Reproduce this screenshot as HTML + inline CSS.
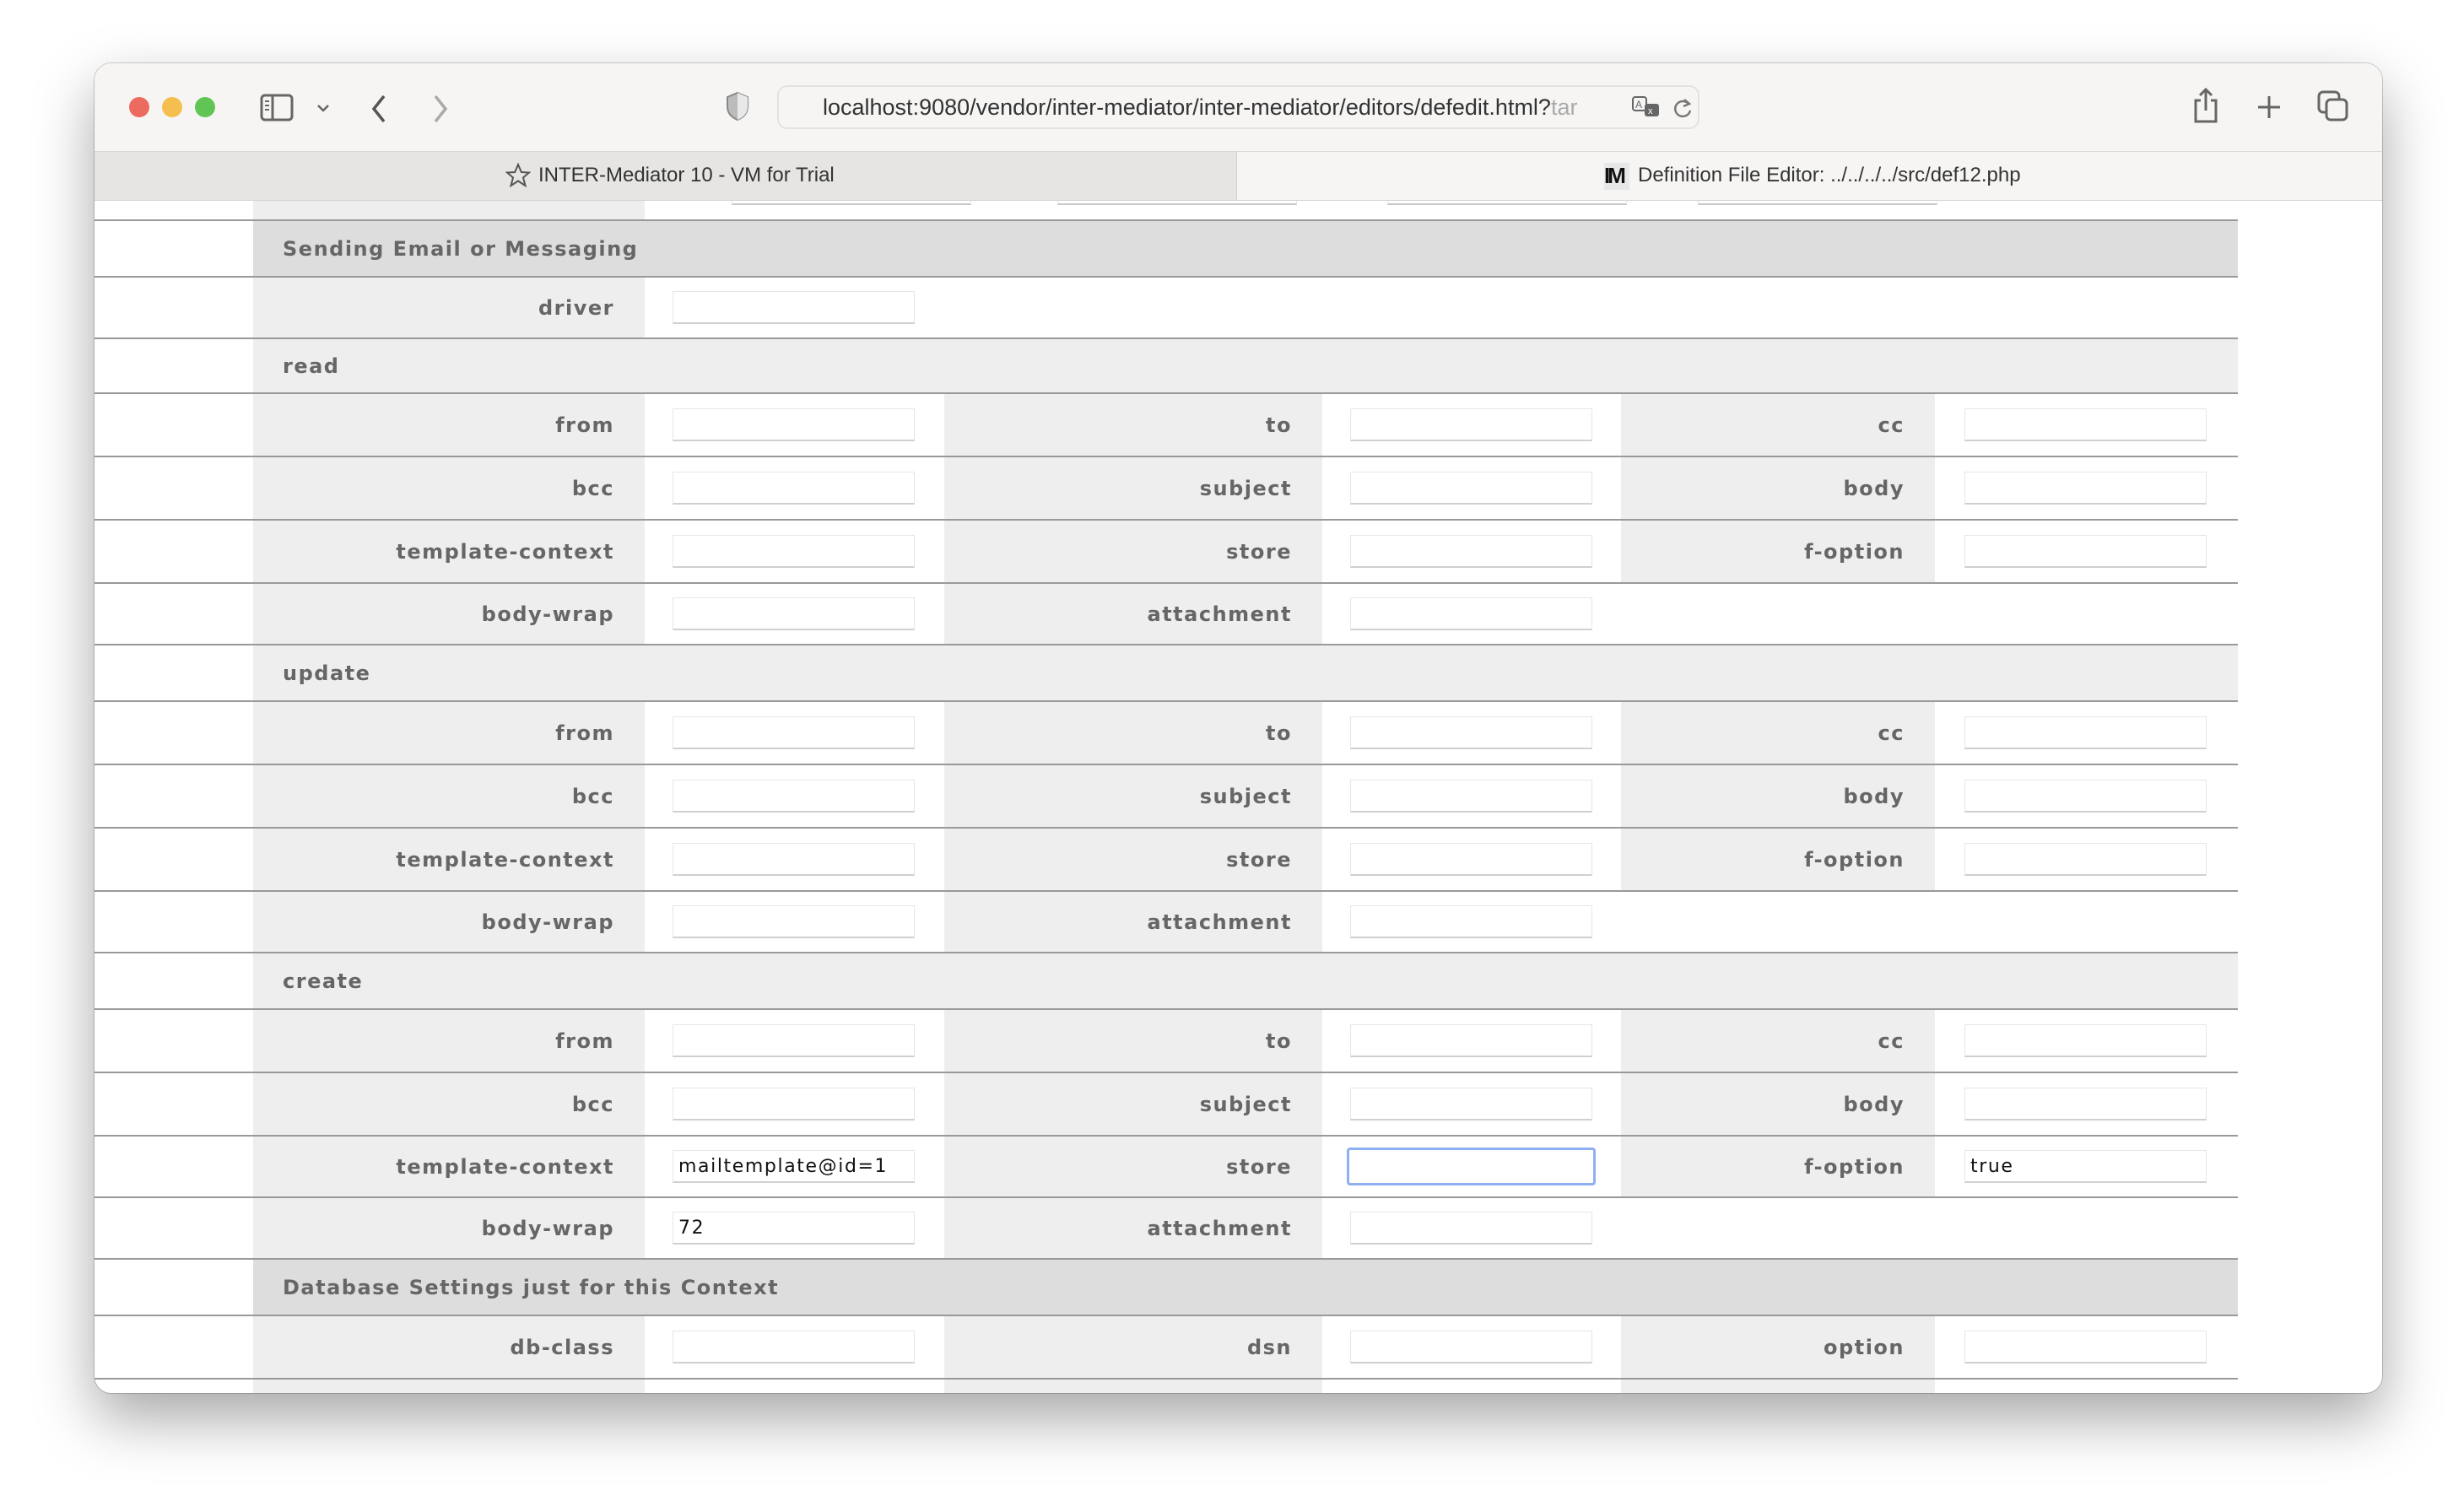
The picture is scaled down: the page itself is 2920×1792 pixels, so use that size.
<!DOCTYPE html>
<html><head><meta charset="utf-8"><style>
*{box-sizing:border-box;margin:0;padding:0}
body{width:2920px;height:1792px;background:#fff;position:relative;overflow:hidden;font-family:"DejaVu Sans","Liberation Sans",sans-serif}
.win{position:absolute;left:112px;top:75px;width:2711px;height:1576px;border-radius:20px;background:#fff;overflow:hidden;box-shadow:0 30px 70px rgba(0,0,0,.35),0 0 0 1px rgba(0,0,0,.18)}
.tb{position:absolute;left:0;top:0;width:100%;height:105px;background:#f6f5f4;border-bottom:1px solid #d8d8d8}
.tabs{position:absolute;left:0;top:105px;width:100%;height:58px;background:#f6f5f4;border-bottom:1px solid #d4d4d4}
.tab1{position:absolute;left:0;top:0;width:1354px;height:57px;background:#e6e5e3;border-right:1px solid #cfcfcf}
.tt{position:absolute;font-family:"Liberation Sans",sans-serif;font-size:24px;color:#333;top:14px}
.dot{position:absolute;top:40px;width:24px;height:24px;border-radius:50%}
.url{position:absolute;left:809px;top:26px;width:1093px;height:52px;border:2px solid #e2e2e2;border-radius:12px;background:#f6f5f4}
.url span{position:absolute;left:52px;top:9px;font-family:"Liberation Sans",sans-serif;font-size:27px;color:#333;white-space:nowrap}
.content{position:absolute;left:0;top:163px;width:100%}
.row{position:relative;border-bottom:2px solid #999;width:2540px}
.c{position:absolute;top:0;bottom:0}
.l{background:#eee;text-align:right;font-weight:bold;color:#666;font-size:24px;letter-spacing:1.5px;display:flex;align-items:center;justify-content:flex-end;padding-right:36px}
.l1{left:188px;width:464px}.l2{left:1007px;width:448px}.l3{left:1809px;width:372px}
.i{position:absolute;top:50%;margin-top:-20px;height:39px;width:287px;background:#fff;border:1px solid #e6e6e6;border-bottom:2px solid #d0d0d0;font-size:22px;letter-spacing:1.6px;color:#111;padding:6px 0 0 6px}
.i1{left:685px}.i2{left:1488px}.i3{left:2216px}
.h{position:absolute;left:188px;right:0;top:0;bottom:0;font-weight:bold;color:#666;font-size:24px;letter-spacing:1.5px;display:flex;align-items:center;padding-left:35px}
.hd{background:#ddd}.hl{background:#eee}
.foc{border:3px solid #8fb0f0;border-radius:4px}
.pi{position:absolute;top:0;height:5px;width:284px;border:1px solid #e6e6e6;border-top:none;border-bottom:2px solid #c8c8c8;background:#fff}
</style></head><body>
<div class="win">
<div class="tb">
 <div class="dot" style="left:41px;background:#ed6a5e"></div>
 <div class="dot" style="left:80px;background:#f5bf4f"></div>
 <div class="dot" style="left:119px;background:#61c554"></div>
 <svg style="position:absolute;left:196px;top:36px" width="40" height="34" viewBox="0 0 40 34"><rect x="2" y="2" width="36" height="29" rx="4" fill="none" stroke="#666" stroke-width="3"/><line x1="15" y1="2" x2="15" y2="31" stroke="#666" stroke-width="3"/><line x1="6" y1="9" x2="11" y2="9" stroke="#666" stroke-width="2"/><line x1="6" y1="14" x2="11" y2="14" stroke="#666" stroke-width="2"/><line x1="6" y1="19" x2="11" y2="19" stroke="#666" stroke-width="2"/></svg>
 <svg style="position:absolute;left:263px;top:47px" width="16" height="12"><path d="M2 3 L8 9 L14 3" fill="none" stroke="#666" stroke-width="2.5"/></svg>
 <svg style="position:absolute;left:325px;top:36px" width="24" height="36"><path d="M18 3 L6 18 L18 33" fill="none" stroke="#555" stroke-width="3.5"/></svg>
 <svg style="position:absolute;left:398px;top:36px" width="24" height="36"><path d="M6 3 L18 18 L6 33" fill="none" stroke="#aaa" stroke-width="3.5"/></svg>
 <svg style="position:absolute;left:747px;top:33px" width="30" height="36"><path d="M15 2 L27 7 L27 18 Q27 29 15 34 Q3 29 3 18 L3 7 Z" fill="#bbb" stroke="#888" stroke-width="2"/><path d="M15 2 L27 7 L27 18 Q27 29 15 34 Z" fill="#e8e8e8"/></svg>
 <div class="url"><span>localhost:9080/vendor/inter-mediator/inter-mediator/editors/defedit.html?<span style="position:static;color:#aaa">tar</span></span>
  <svg style="position:absolute;left:1010px;top:10px" width="36" height="30"><rect x="2" y="2" width="16" height="16" rx="3" fill="none" stroke="#666" stroke-width="2"/><text x="5" y="15" font-size="12" fill="#666" font-family="Liberation Sans">A</text><rect x="16" y="10" width="17" height="15" rx="3" fill="#666"/><text x="20" y="22" font-size="11" fill="#fff" font-family="Liberation Sans">x</text></svg>
  <svg style="position:absolute;left:1058px;top:12px" width="26" height="28"><path d="M20 8 A9 9 0 1 0 22 16" fill="none" stroke="#777" stroke-width="2.5"/><path d="M15 3 L21 8 L14 11" fill="none" stroke="#777" stroke-width="2.5"/></svg>
 </div>
 <svg style="position:absolute;left:2487px;top:28px" width="30" height="44"><path d="M9 16 L3 16 L3 41 L27 41 L27 16 L21 16" fill="none" stroke="#666" stroke-width="3"/><path d="M15 28 L15 3 M8 10 L15 3 L22 10" fill="none" stroke="#666" stroke-width="3"/></svg>
 <svg style="position:absolute;left:2562px;top:37px" width="30" height="30"><path d="M15 2 V28 M2 15 H28" stroke="#666" stroke-width="3"/></svg>
 <svg style="position:absolute;left:2634px;top:32px" width="38" height="38"><rect x="2" y="2" width="24" height="24" rx="5" fill="none" stroke="#666" stroke-width="3"/><rect x="11" y="11" width="24" height="24" rx="5" fill="#f6f5f4" stroke="#666" stroke-width="3"/></svg>
</div>
<div class="tabs">
 <div class="tab1">
  <svg style="position:absolute;left:487px;top:13px" width="30" height="30"><path d="M15 2 L18.8 11 L28 11.5 L21 17.5 L23.5 27 L15 21.5 L6.5 27 L9 17.5 L2 11.5 L11.2 11 Z" fill="none" stroke="#555" stroke-width="2"/></svg>
  <div class="tt" style="left:526px">INTER-Mediator 10 - VM for Trial</div>
 </div>
 <div style="position:absolute;left:1789px;top:13px;width:30px;height:32px;background:#e8e8e8;font:bold 26px 'Liberation Sans';color:#111;letter-spacing:-3px;line-height:30px">IM</div>
 <div class="tt" style="left:1829px">Definition File Editor: ../../../../src/def12.php</div>
</div>
<div class="content">
 <div class="row" style="height:24px"><div class="c l l1"></div>
  <div class="pi" style="left:755px"></div><div class="pi" style="left:1141px"></div><div class="pi" style="left:1532px"></div><div class="pi" style="left:1900px"></div></div>
 <div class="row" style="height:67px"><div class="h hd">Sending Email or Messaging</div></div>
 <div class="row" style="height:73px"><div class="c l l1">driver</div><div class="i i1"></div></div>
 <div class="row" style="height:65px"><div class="h hl">read</div></div>
 <div class="row" style="height:75px"><div class="c l l1">from</div><div class="i i1"></div><div class="c l l2">to</div><div class="i i2"></div><div class="c l l3">cc</div><div class="i i3"></div></div>
 <div class="row" style="height:75px"><div class="c l l1">bcc</div><div class="i i1"></div><div class="c l l2">subject</div><div class="i i2"></div><div class="c l l3">body</div><div class="i i3"></div></div>
 <div class="row" style="height:75px"><div class="c l l1">template-context</div><div class="i i1"></div><div class="c l l2">store</div><div class="i i2"></div><div class="c l l3">f-option</div><div class="i i3"></div></div>
 <div class="row" style="height:73px"><div class="c l l1">body-wrap</div><div class="i i1"></div><div class="c l l2">attachment</div><div class="i i2"></div></div>
 <div class="row" style="height:67px"><div class="h hl">update</div></div>
 <div class="row" style="height:75px"><div class="c l l1">from</div><div class="i i1"></div><div class="c l l2">to</div><div class="i i2"></div><div class="c l l3">cc</div><div class="i i3"></div></div>
 <div class="row" style="height:75px"><div class="c l l1">bcc</div><div class="i i1"></div><div class="c l l2">subject</div><div class="i i2"></div><div class="c l l3">body</div><div class="i i3"></div></div>
 <div class="row" style="height:75px"><div class="c l l1">template-context</div><div class="i i1"></div><div class="c l l2">store</div><div class="i i2"></div><div class="c l l3">f-option</div><div class="i i3"></div></div>
 <div class="row" style="height:73px"><div class="c l l1">body-wrap</div><div class="i i1"></div><div class="c l l2">attachment</div><div class="i i2"></div></div>
 <div class="row" style="height:67px"><div class="h hl">create</div></div>
 <div class="row" style="height:75px"><div class="c l l1">from</div><div class="i i1"></div><div class="c l l2">to</div><div class="i i2"></div><div class="c l l3">cc</div><div class="i i3"></div></div>
 <div class="row" style="height:75px"><div class="c l l1">bcc</div><div class="i i1"></div><div class="c l l2">subject</div><div class="i i2"></div><div class="c l l3">body</div><div class="i i3"></div></div>
 <div class="row" style="height:73px"><div class="c l l1">template-context</div><div class="i i1">mailtemplate@id=1</div><div class="c l l2">store</div><div class="i i2 foc" style="left:1484px;width:295px;height:45px;margin-top:-23px"></div><div class="c l l3">f-option</div><div class="i i3">true</div></div>
 <div class="row" style="height:73px"><div class="c l l1">body-wrap</div><div class="i i1">72</div><div class="c l l2">attachment</div><div class="i i2"></div></div>
 <div class="row" style="height:67px"><div class="h hd">Database Settings just for this Context</div></div>
 <div class="row" style="height:75px"><div class="c l l1">db-class</div><div class="i i1"></div><div class="c l l2">dsn</div><div class="i i2"></div><div class="c l l3">option</div><div class="i i3"></div></div>
 <div class="row" style="height:60px;border-bottom:none"><div class="c l l1"></div><div class="i i1" style="top:40px"></div><div class="c l l2"></div><div class="i i2" style="top:40px"></div><div class="c l l3"></div><div class="i i3" style="top:40px"></div></div>
</div>
</div>
</body></html>
